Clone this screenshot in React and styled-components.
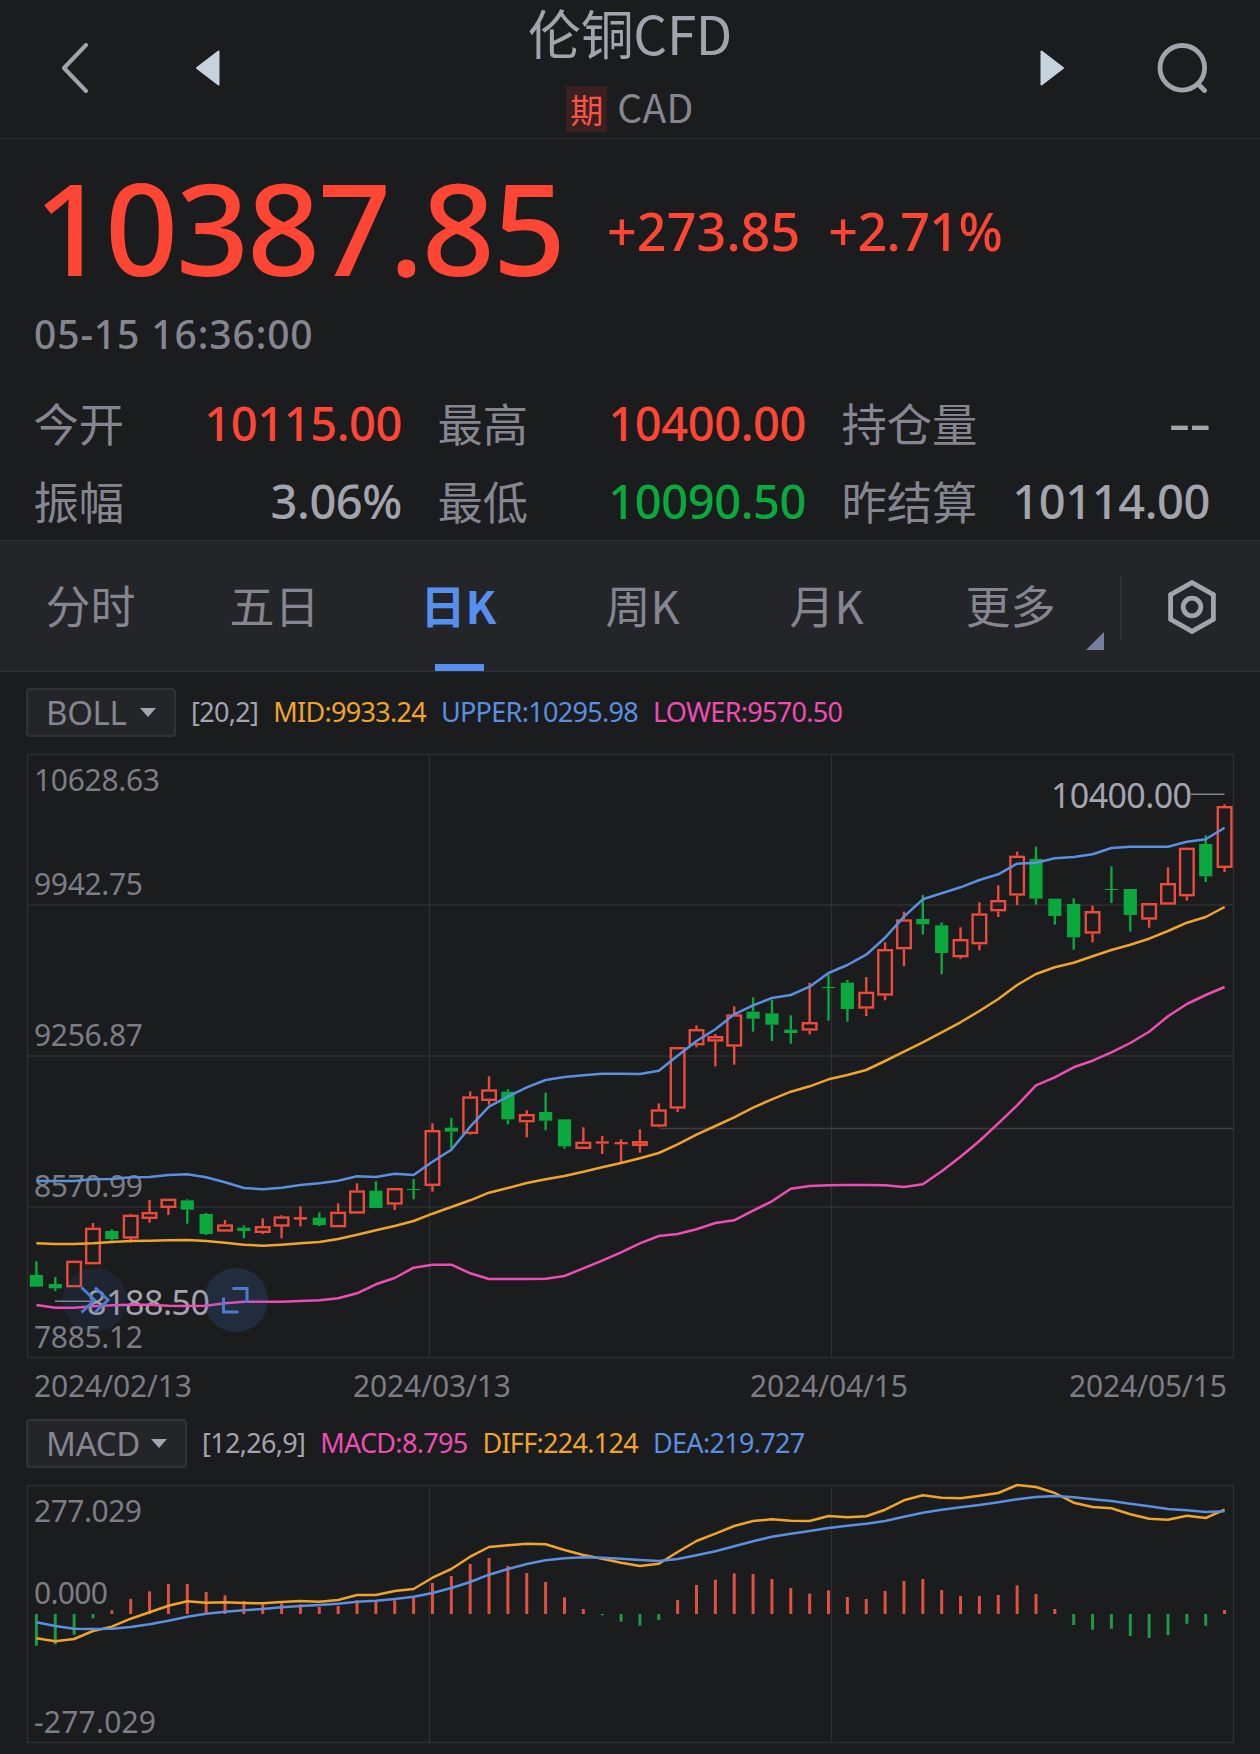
import styled, {createGlobalStyle} from 'styled-components';

const RED = '#ff4635';
const GREEN = '#0ba83d';
const BLUE = '#5b8fe0';
const ORANGE = '#f0a42c';
const PINK = '#ee4eb4';

const GlobalStyle = createGlobalStyle`
    body {
        background-color: #1b1c1e;
        margin: 0;
        padding: 0;
        font-family: 'Noto Sans', 'Noto Sans CJK SC', sans-serif;
    }

    * {
        box-sizing: border-box;
    }
`;

const Container = styled.div`
    width: 1260px;
    height: 1754px;
    overflow: hidden;
    color: #85868f;
`;

const Header = styled.header`
    display: grid;
    grid-template-columns: 1fr auto 1fr;
    height: 139px;
    border-bottom: 1px solid #2f3133;
`;

const NavGroup = styled.div`
    display: flex;
    align-items: center;
    justify-content: ${({$end}) => ($end ? 'flex-end' : 'flex-start')};
    gap: ${({$end}) => ($end ? 92 : 107)}px;
    padding: ${({$end}) => ($end ? '0 52px 3px 0' : '0 0 3px 61px')};
`;

const TitleBox = styled.div`
    display: flex;
    flex-direction: column;
    align-items: center;
`;

const Title = styled.h1`
    margin: 0;
    font-family: 'Noto Sans CJK SC', sans-serif;
    font-size: 53px;
    font-weight: 400;
    line-height: 65px;
    letter-spacing: -0.3px;
    color: #a3a3ad;
`;

const SubTitle = styled.div`
    display: flex;
    align-items: center;
    gap: 10px;
    margin-top: 21px;
    font-family: 'Noto Sans CJK SC', sans-serif;
    font-size: 38px;
    line-height: 46px;
`;

const Badge = styled.span`
    width: 41px;
    height: 46px;
    font-size: 33px;
    line-height: 47px;
    text-align: center;
    color: #fb5345;
    background-color: #3a2021;
`;

const Code = styled.span`
    height: 46px;
    font-size: 39px;
    line-height: 41px;
    letter-spacing: 0.4px;
`;

const Quote = styled.section`
    height: 401px;
    padding: 23px 34px 0;
`;

const PriceRow = styled.div`
    display: flex;
    align-items: center;
    height: 130px;
    color: ${RED};
`;

const Price = styled.div`
    width: 573px;
    font-size: 128px;
    font-weight: 500;
    line-height: 130px;
    letter-spacing: -2.2px;
`;

const Change = styled.div`
    margin-right: 28px;
    padding-top: 8px;
    font-size: 52px;
    font-weight: 500;
    line-height: 60px;
    letter-spacing: ${({$tight}) => ($tight ? -0.6 : 0.1)}px;
`;

const Time = styled.div`
    margin-top: 16px;
    font-size: 39px;
    font-weight: 500;
    line-height: 51px;
    letter-spacing: 0.9px;
`;

const Stats = styled.div`
    display: grid;
    grid-template-columns: 368px 368px 368px;
    grid-auto-rows: 78px;
    column-gap: 36px;
    width: 1176px;
    margin-top: 25px;
`;

const Stat = styled.div`
    display: flex;
    align-items: center;
    justify-content: space-between;
`;

const StatLabel = styled.span`
    font-family: 'Noto Sans CJK SC', sans-serif;
    font-size: 45.3px;
    line-height: 60px;
    padding-bottom: 2px;
    margin-left: -0.5px;
`;

const StatValue = styled.span`
    font-size: 47px;
    font-weight: 500;
    line-height: 60px;
    letter-spacing: -0.4px;
    color: ${({$color}) => $color || '#a3a4ae'};
    transform: ${({$empty}) => ($empty ? 'scaleX(1.42)' : 'none')};
    transform-origin: right center;
`;

const TabBar = styled.nav`
    display: flex;
    align-items: center;
    height: 132px;
    background-color: #242529;
    border-top: 1px solid #313235;
    border-bottom: 1px solid #313235;
`;

const Tabs = styled.div`
    display: flex;
    width: 1104px;
    height: 130px;
`;

const Tab = styled.div`
    position: relative;
    flex: 1;
    padding-right: 3px;
    text-align: center;
    font-family: 'Noto Sans CJK SC', sans-serif;
    font-size: 45px;
    font-weight: ${({$active}) => ($active ? 700 : 400)};
    line-height: 128px;
    color: ${({$active}) => ($active ? '#5590ee' : '#85868f')};

    &::after {
        content: '';
        display: ${({$active}) => ($active ? 'block' : 'none')};
        position: absolute;
        left: 67px;
        bottom: 0;
        width: 49px;
        height: 7px;
        background-color: #5590ee;
    }
`;

const MoreCorner = styled.span`
    position: absolute;
    right: 0;
    bottom: 21px;
    width: 18px;
    height: 18px;
    background-color: #74809e;
    clip-path: polygon(100% 0, 100% 100%, 0 100%);
`;

const Divider = styled.div`
    width: 2px;
    height: 64px;
    margin: 3px 0 0 16px;
    background-color: #303135;
`;

const SettingButton = styled.div`
    display: flex;
    flex: 1;
    justify-content: center;
    padding: 2px 0 0 1px;
`;

const Legend = styled.div`
    display: flex;
    align-items: center;
    gap: 15px;
    height: ${({$height}) => $height}px;
    padding: ${({$pad}) => $pad};
    font-size: 27px;
    letter-spacing: -0.7px;
    white-space: nowrap;
`;

const Chip = styled.div`
    display: flex;
    align-items: center;
    justify-content: space-between;
    width: ${({$width}) => $width}px;
    height: 49px;
    padding: 0 18px 0 18px;
    border: 2px solid #323337;
    border-radius: 4px;
    background-color: #242529;
    font-size: 33px;
    letter-spacing: -0.3px;
`;

const LegendItem = styled.span`
    line-height: 44px;
    padding-bottom: 2px;
    color: ${({$color}) => $color};
`;

const Chart = styled.svg`
    display: block;
    font-size: 30px;
    fill: #7c7d85;
`;

// [up, body top, body bottom, high, low], in thirds of a pixel
const candles = [
    [0, 1605, 1640, 1564, 1640], [0, 1632, 1645, 1611, 1653], [1, 1562, 1642, 1561, 1642],
    [1, 1463, 1573, 1449, 1573], [0, 1473, 1497, 1468, 1502], [1, 1424, 1496, 1421, 1508],
    [1, 1416, 1437, 1380, 1448], [1, 1376, 1404, 1376, 1425], [0, 1381, 1409, 1378, 1451],
    [0, 1422, 1482, 1419, 1485], [1, 1453, 1475, 1440, 1475], [0, 1463, 1473, 1456, 1495],
    [1, 1458, 1479, 1435, 1482], [1, 1429, 1460, 1426, 1495], [1, 1431, 1439, 1399, 1459],
    [0, 1433, 1455, 1417, 1458], [1, 1415, 1462, 1390, 1462], [1, 1351, 1421, 1330, 1421],
    [0, 1352, 1404, 1324, 1405], [1, 1344, 1394, 1344, 1410], [0, 1347, 1350, 1317, 1378],
    [1, 1170, 1338, 1150, 1355], [0, 1163, 1175, 1134, 1224], [1, 1069, 1182, 1054, 1184],
    [1, 1048, 1083, 1009, 1094], [0, 1055, 1138, 1048, 1153], [1, 1122, 1147, 1111, 1192],
    [0, 1116, 1142, 1058, 1171], [0, 1138, 1219, 1138, 1226], [1, 1205, 1227, 1162, 1227],
    [1, 1204, 1211, 1188, 1242], [1, 1206, 1213, 1198, 1266], [1, 1203, 1218, 1168, 1238],
    [1, 1108, 1160, 1090, 1162], [1, 921, 1106, 921, 1116], [1, 867, 916, 856, 922],
    [1, 888, 905, 882, 979], [1, 823, 920, 799, 974], [0, 815, 836, 772, 875],
    [0, 820, 854, 780, 903], [0, 869, 879, 826, 911], [1, 846, 872, 728, 883],
    [0, 741, 744, 704, 842], [0, 728, 807, 720, 845], [1, 755, 806, 711, 828],
    [1, 627, 767, 607, 781], [1, 538, 628, 515, 679], [0, 537, 553, 465, 584],
    [0, 556, 639, 547, 703], [1, 597, 652, 562, 657], [1, 520, 613, 487, 631],
    [1, 480, 514, 436, 531], [1, 347, 467, 335, 495], [0, 357, 476, 320, 494],
    [0, 476, 528, 476, 554], [0, 492, 592, 475, 629], [1, 513, 581, 497, 607],
    [0, 447, 450, 379, 489], [0, 447, 525, 447, 575], [1, 489, 539, 489, 563],
    [1, 429, 494, 382, 494], [1, 323, 469, 323, 482], [0, 312, 409, 286, 426],
    [1, 198, 384, 193, 396],
];

const upper = [
    1323, 1323, 1323, 1318, 1317, 1312, 1311, 1305, 1303, 1312, 1327, 1344, 1348, 1343, 1335, 1330,
    1322, 1309, 1311, 1301, 1305, 1265, 1229, 1160, 1100, 1070, 1042, 1020, 1011, 1006, 1001, 1001,
    1002, 992, 947, 903, 868, 823, 796, 774, 765, 740, 699, 675, 644, 593, 530, 478,
    460, 442, 420, 403, 371, 368, 355, 351, 343, 324, 320, 320, 320, 305, 298, 263,
];

const mid = [
    1510, 1512, 1512, 1510, 1506, 1503, 1502, 1501, 1500, 1503, 1508, 1514, 1517, 1514, 1510, 1506,
    1497, 1484, 1471, 1458, 1443, 1421, 1401, 1381, 1358, 1344, 1329, 1318, 1308, 1295, 1282, 1269,
    1255, 1239, 1213, 1184, 1158, 1132, 1103, 1078, 1055, 1039, 1018, 1005, 990, 963, 935, 907,
    877, 847, 813, 777, 735, 702, 682, 668, 649, 630, 614, 596, 573, 548, 531, 501,
];

const lower = [
    1695, 1703, 1703, 1699, 1696, 1694, 1694, 1697, 1698, 1697, 1690, 1685, 1685, 1685, 1683, 1681,
    1675, 1660, 1633, 1614, 1583, 1574, 1574, 1600, 1617, 1617, 1617, 1616, 1608, 1585, 1562, 1537,
    1510, 1488, 1482, 1468, 1449, 1441, 1412, 1384, 1346, 1338, 1336, 1335, 1335, 1336, 1341, 1333,
    1294, 1250, 1203, 1150, 1096, 1036, 1012, 982, 962, 937, 909, 875, 829, 792, 765, 741,
];

const MACD_ZERO = 612;

const macd = [
    707, 703, 674, 625, 601, 567, 544, 522, 522, 546, 556, 573, 583, 580, 583, 591,
    588, 571, 576, 571, 564, 519, 498, 462, 444, 468, 489, 516, 562, 597, 616, 635,
    647, 630, 570, 525, 509, 490, 492, 507, 534, 551, 541, 561, 567, 543, 513, 507,
    540, 558, 558, 555, 526, 552, 597, 645, 659, 656, 678, 684, 675, 641, 647, 600,
];

const diff = [
    685, 694, 687, 663, 650, 626, 607, 587, 574, 578, 577, 579, 580, 576, 573, 575,
    570, 555, 555, 543, 537, 503, 477, 440, 411, 406, 401, 403, 420, 435, 446, 458,
    468, 461, 426, 393, 371, 348, 333, 328, 332, 333, 318, 322, 319, 299, 271, 256,
    263, 265, 257, 249, 225, 231, 249, 278, 291, 295, 313, 326, 329, 317, 324, 299,
];

const dea = [
    637, 648, 656, 657, 656, 651, 643, 632, 620, 611, 605, 601, 597, 592, 588, 585,
    581, 575, 572, 567, 560, 549, 534, 516, 494, 477, 462, 451, 445, 442, 443, 446,
    450, 453, 447, 436, 424, 409, 394, 380, 371, 363, 354, 347, 341, 333, 320, 308,
    299, 292, 285, 277, 268, 261, 258, 262, 268, 273, 281, 289, 297, 301, 306, 304,
];

const stats = [
    {label: '今开', value: '10115.00', color: RED},
    {label: '最高', value: '10400.00', color: RED},
    {label: '持仓量', value: '--'},
    {label: '振幅', value: '3.06%'},
    {label: '最低', value: '10090.50', color: GREEN},
    {label: '昨结算', value: '10114.00'},
];

const tabs = ['分时', '五日', '日K', '周K', '月K', '更多'];

const xAt = (i) => 36.4 + i * 18.86;

const toPoints = (values, offset) =>
        values.map((v, i) => `${xAt(i).toFixed(1)},${(v / 3 - offset).toFixed(1)}`).join(' ');

function Line({values, color, offset = 0}) {
    return <polyline points={toPoints(values, offset)} fill="none" stroke={color}
                     strokeWidth="2.5" strokeLinejoin="round"/>;
}

function Candle({index, data}) {
    const [up, top, bottom, high, low] = data.map((v, i) => (i ? v / 3 : v));
    const x = xAt(index);
    const color = up ? '#ec4b3c' : GREEN;

    return (
            <g stroke={color} strokeWidth="2.4">
                <line x1={x} x2={x} y1={high} y2={top}/>
                <line x1={x} x2={x} y1={bottom} y2={low}/>
                {up && bottom - top > 3 ? (
                        <rect x={x - 6.8} y={top + 1.2} width="13.6" height={bottom - top - 2.4}
                              fill="none"/>
                ) : (
                        <rect x={x - 6.6} y={top} width="13.2" height={bottom - top}
                              fill={color} stroke="none"/>
                )}
            </g>
    );
}

function AxisText({x, y, width, children, ...rest}) {
    return <text x={x} y={y} textLength={width} {...rest}>{children}</text>;
}

function Caret() {
    return (
            <svg width="16" height="9" viewBox="0 0 16 9">
                <path d="M0 0H16L8 9Z" fill="#a3a4ae"/>
            </svg>
    );
}

function PriceChart() {
    return (
            <Chart width="1260" height="670" viewBox="0 0 1260 670">
                <g fill="none" stroke="#2e2f32" strokeWidth="1.4">
                    <rect x="27.5" y="14.5" width="1206" height="603"/>
                    <path d="M27.5 165H1233.5M27.5 316H1233.5M27.5 467H1233.5"/>
                    <path d="M429.5 14.5V617.5M831.5 14.5V617.5"/>
                    <path d="M660 388.5H1233.5" stroke="#3d3e41"/>
                </g>

                <AxisText x="34" y="50.7" width="126">10628.63</AxisText>
                <AxisText x="34" y="154.7" width="109">9942.75</AxisText>
                <AxisText x="34" y="305.7" width="109">9256.87</AxisText>
                <AxisText x="34" y="456.7" width="109">8570.99</AxisText>
                <AxisText x="34" y="607.7" width="109">7885.12</AxisText>

                {candles.map((data, i) => <Candle key={i} index={i} data={data}/>)}

                <g fontSize="34" fill="#a3a4ae">
                    <AxisText x="1051" y="67.8" width="141">10400.00</AxisText>
                    <AxisText x="87" y="574.8" width="123">8188.50</AxisText>
                    <path d="M1191 54.3H1224.5M55 561.3H91" stroke="#85868f" strokeWidth="1.4"/>
                </g>

                <Line values={upper} color={BLUE}/>
                <Line values={mid} color={ORANGE}/>
                <Line values={lower} color={PINK}/>

                {/* floating buttons over the chart */}
                <circle cx="94.5" cy="560" r="32" fill="#3f78c8" fillOpacity="0.11"/>
                <circle cx="236" cy="560" r="32" fill="#3f78c8" fillOpacity="0.18"/>
                <g fill="none" stroke="#4a7dcc" strokeWidth="3">
                    <path d="M81.5 547.5L94.5 560L81.5 572.5M95 547.5L108 560L95 572.5"/>
                    <path d="M232.5 548.5H247V562.5M223.5 557.5V572H238.5"/>
                </g>

                <AxisText x="34" y="656.7" width="158">2024/02/13</AxisText>
                <AxisText x="353" y="656.7" width="158">2024/03/13</AxisText>
                <AxisText x="750" y="656.7" width="158">2024/04/15</AxisText>
                <AxisText x="1069" y="656.7" width="158">2024/05/15</AxisText>
            </Chart>
    );
}

function MacdChart() {
    const zero = MACD_ZERO / 3 - 66;

    return (
            <Chart width="1260" height="278" viewBox="0 0 1260 278">
                <g fill="none" stroke="#2e2f32" strokeWidth="1.4">
                    <rect x="27.5" y="9.5" width="1206" height="257"/>
                    <path d="M429.5 12V266.5M831.5 12V266.5"/>
                </g>

                <AxisText x="34" y="45.7" width="108">277.029</AxisText>
                <AxisText x="34" y="127.7" width="74">0.000</AxisText>
                <AxisText x="34" y="256.5" width="122">-277.029</AxisText>

                {macd.map((v, i) => (
                        <line key={i} x1={xAt(i)} x2={xAt(i)} y1={zero} y2={v / 3 - 66}
                              stroke={v < MACD_ZERO ? '#e0513f' : '#1d9a43'} strokeWidth="3"/>
                ))}

                <Line values={diff} color={ORANGE} offset={66}/>
                <Line values={dea} color={BLUE} offset={66}/>
            </Chart>
    );
}

function App() {
    return (
            <>
                <GlobalStyle/>
                <Container>
                    <Header>
                        <NavGroup>
                            <svg width="27" height="50" viewBox="0 0 27 50">
                                <path d="M25 2L3 25L25 48" fill="none" stroke="#a3a3ab"
                                      strokeWidth="4" strokeLinecap="round" strokeLinejoin="round"/>
                            </svg>
                            <svg width="25" height="36" viewBox="0 0 25 36">
                                <path d="M23.5 1.5V34.5L2 18Z" fill="#c6d2de" stroke="#c6d2de"
                                      strokeWidth="2" strokeLinejoin="round"/>
                            </svg>
                        </NavGroup>
                        <TitleBox>
                            <Title>伦铜CFD</Title>
                            <SubTitle>
                                <Badge>期</Badge>
                                <Code>CAD</Code>
                            </SubTitle>
                        </TitleBox>
                        <NavGroup $end>
                            <svg width="25" height="36" viewBox="0 0 25 36">
                                <path d="M1.5 1.5V34.5L23 18Z" fill="#c6d2de" stroke="#c6d2de"
                                      strokeWidth="2" strokeLinejoin="round"/>
                            </svg>
                            <svg width="51" height="50" viewBox="0 0 51 50">
                                <g fill="none" stroke="#a3a3ab" strokeWidth="4.8" strokeLinecap="round">
                                    <circle cx="25.3" cy="24.8" r="22.3"/>
                                    <path d="M41 41L47.5 47.5"/>
                                </g>
                            </svg>
                        </NavGroup>
                    </Header>

                    <Quote>
                        <PriceRow>
                            <Price>10387.85</Price>
                            <Change>+273.85</Change>
                            <Change $tight>+2.71%</Change>
                        </PriceRow>
                        <Time>05-15 16:36:00</Time>
                        <Stats>
                            {stats.map(({label, value, color}) => (
                                    <Stat key={label}>
                                        <StatLabel>{label}</StatLabel>
                                        <StatValue $color={color} $empty={value === '--'}>
                                            {value}
                                        </StatValue>
                                    </Stat>
                            ))}
                        </Stats>
                    </Quote>

                    <TabBar>
                        <Tabs>
                            {tabs.map(name => (
                                    <Tab key={name} $active={name === '日K'}>
                                        {name}
                                        {name === '更多' && <MoreCorner/>}
                                    </Tab>
                            ))}
                        </Tabs>
                        <Divider/>
                        <SettingButton>
                            <svg width="50" height="56" viewBox="0 0 50 56">
                                <g fill="none" stroke="#a3a3ab" strokeWidth="4.8">
                                    <path d="M25 3.6L46.4 15.6V40.4L25 52.4L3.6 40.4V15.6Z"/>
                                    <circle cx="25" cy="28" r="8.8"/>
                                </g>
                            </svg>
                        </SettingButton>
                    </TabBar>

                    <Legend $height={68} $pad="13px 0 0 26px">
                        <Chip $width={150}>BOLL<Caret/></Chip>
                        <LegendItem $color="#a3a4ae">[20,2]</LegendItem>
                        <LegendItem $color={ORANGE}>MID:9933.24</LegendItem>
                        <LegendItem $color={BLUE}>UPPER:10295.98</LegendItem>
                        <LegendItem $color={PINK}>LOWER:9570.50</LegendItem>
                    </Legend>
                    <PriceChart/>

                    <Legend $height={66} $pad="1px 0 0 26px">
                        <Chip $width={161}>MACD<Caret/></Chip>
                        <LegendItem $color="#a3a4ae">[12,26,9]</LegendItem>
                        <LegendItem $color={PINK}>MACD:8.795</LegendItem>
                        <LegendItem $color={ORANGE}>DIFF:224.124</LegendItem>
                        <LegendItem $color={BLUE}>DEA:219.727</LegendItem>
                    </Legend>
                    <MacdChart/>
                </Container>
            </>
    );
}

export default App;
